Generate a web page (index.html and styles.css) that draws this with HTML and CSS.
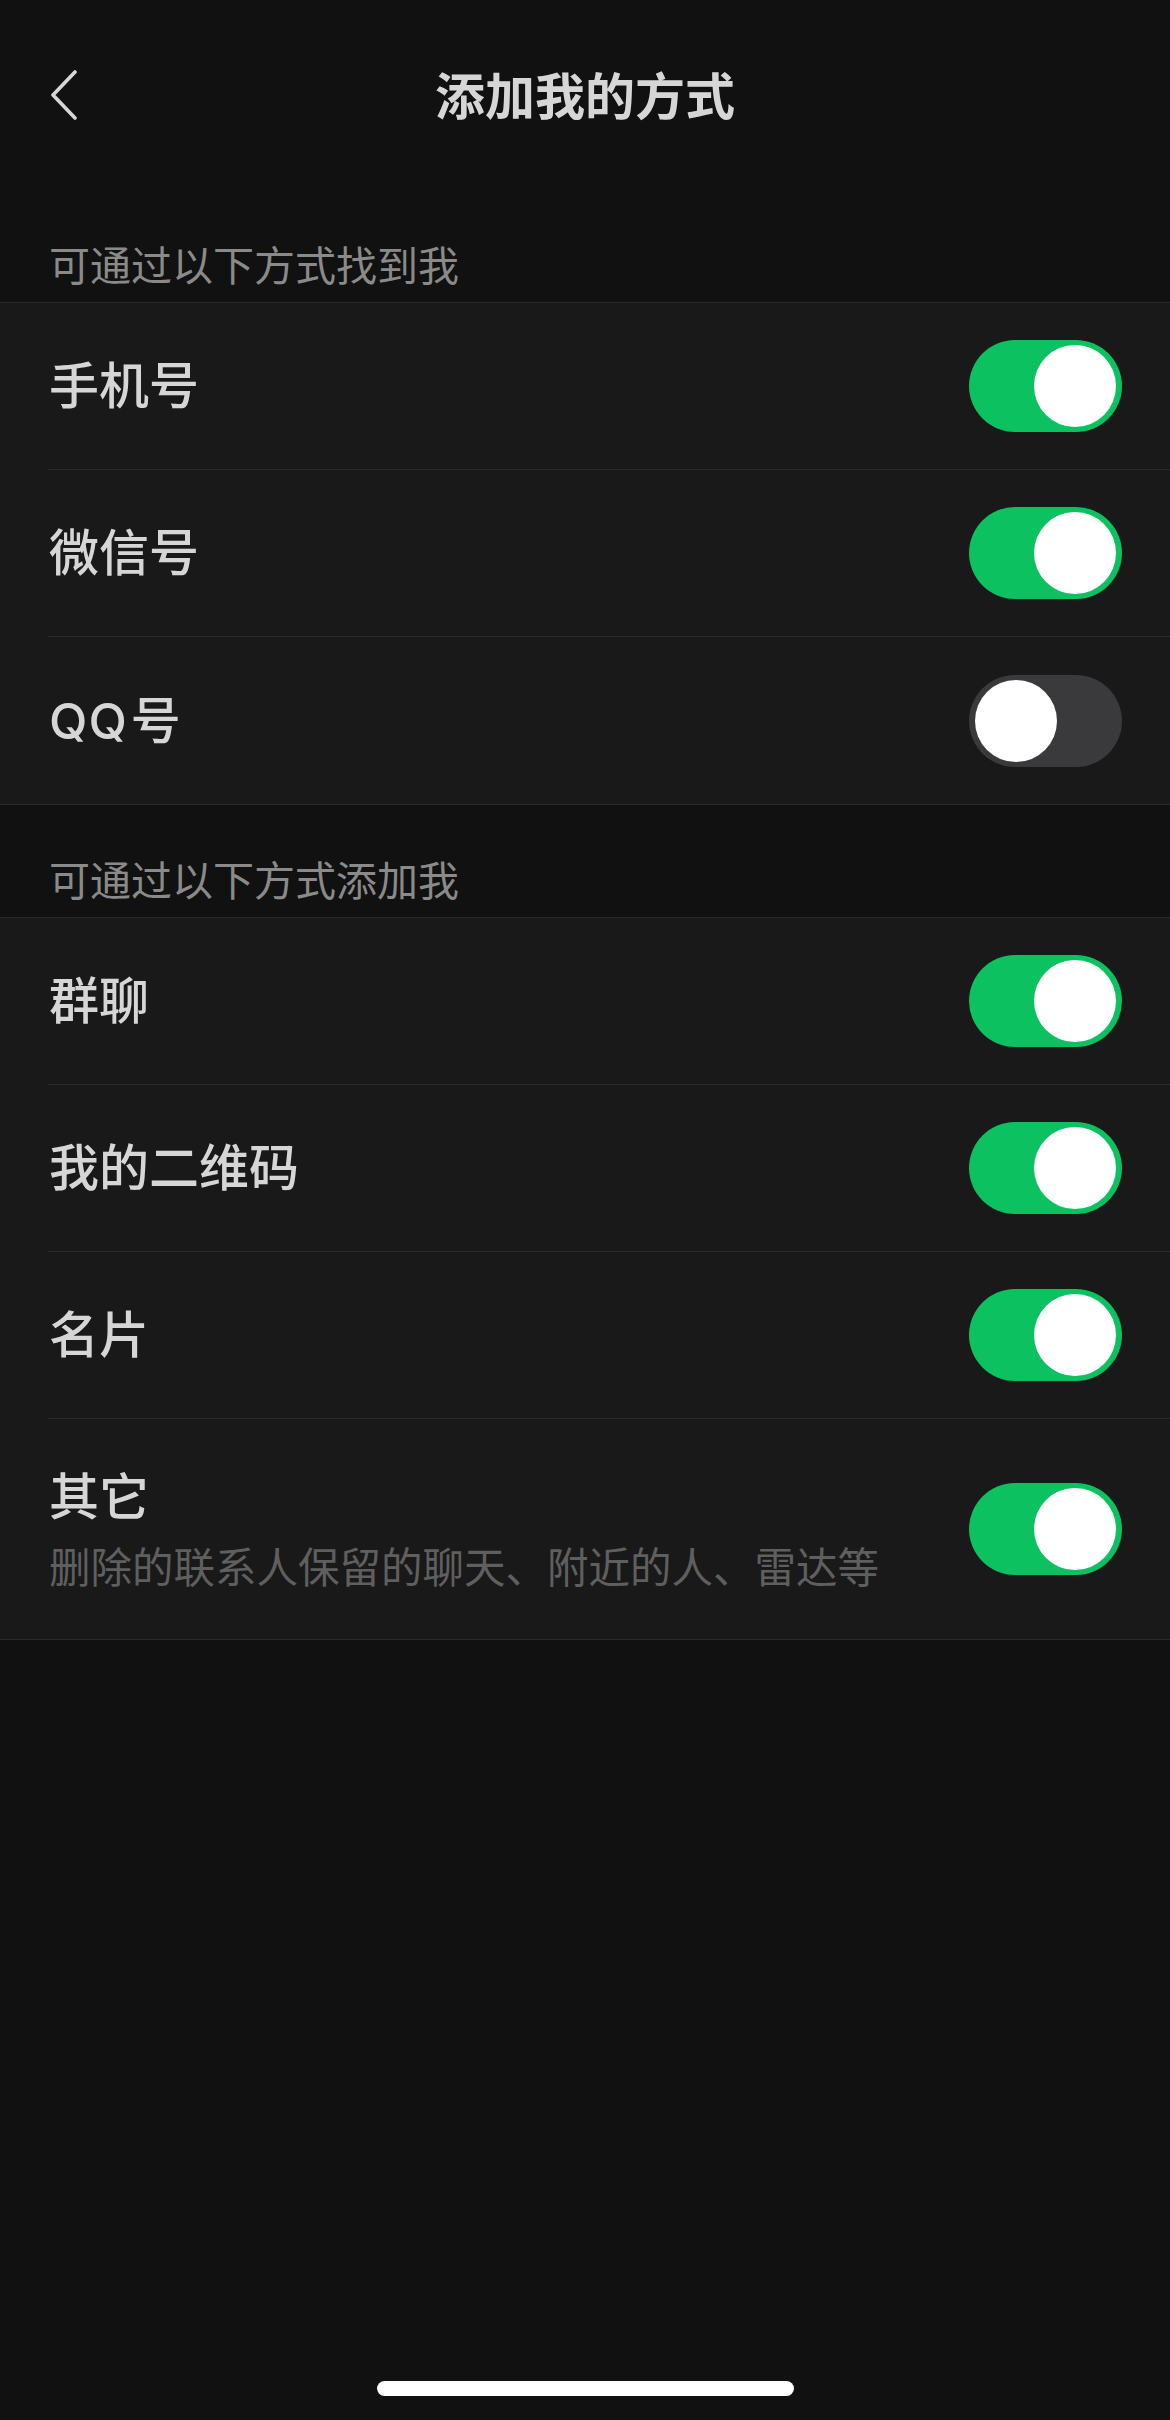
FILE: index.html
```html
<!DOCTYPE html>
<html lang="zh-CN">
    <head>
        <meta charset="UTF-8" />
        <title>添加我的方式</title>
        <link rel="stylesheet" href="styles.css">
    </head>
    <body>
        <div class="page">
            <header class="nav">
                <button class="back" aria-label="返回">
                    <svg width="40" height="60" viewBox="0 0 40 60">
                        <polyline points="26,12 4,35 26,58" fill="none" stroke="#d6d6d6" stroke-width="3.6" stroke-linecap="round" stroke-linejoin="round" />
                    </svg>
                </button>
                <h1>添加我的方式</h1>
            </header>

            <div class="section-title">可通过以下方式找到我</div>
            <div class="group">
                <div class="row">
                    <span class="label">手机号</span>
                    <span class="switch on"></span>
                </div>
                <div class="row">
                    <span class="label">微信号</span>
                    <span class="switch on"></span>
                </div>
                <div class="row">
                    <span class="label"><span class="latin">QQ</span>号</span>
                    <span class="switch"></span>
                </div>
            </div>

            <div class="section-title">可通过以下方式添加我</div>
            <div class="group">
                <div class="row">
                    <span class="label">群聊</span>
                    <span class="switch on"></span>
                </div>
                <div class="row">
                    <span class="label">我的二维码</span>
                    <span class="switch on"></span>
                </div>
                <div class="row">
                    <span class="label">名片</span>
                    <span class="switch on"></span>
                </div>
                <div class="row tall">
                    <div class="text">
                        <span class="label">其它</span>
                        <span class="desc">删除的联系人保留的聊天、附近的人、雷达等</span>
                    </div>
                    <span class="switch on"></span>
                </div>
            </div>

            <div class="spacer"></div>
            <div class="home-bar"></div>
        </div>
    </body>
</html>
```

FILE: styles.css
```css
html,
body {
    margin: 0;
    padding: 0;
    background: #111111;
}
body {
    font-family: "Noto Sans CJK SC", "Noto Sans", sans-serif;
    color: #d6d6d6;
}
.page {
    width: 1170px;
    min-height: 2420px;
    display: flex;
    flex-direction: column;
}
.nav {
    height: 190px;
    display: flex;
    align-items: center;
    justify-content: center;
    position: relative;
}
.nav h1 {
    margin: -4px 0 0;
    font-size: 50px;
    font-weight: 700;
    line-height: 60px;
    color: #d6d6d6;
}
.back {
    position: absolute;
    left: 49px;
    top: 60px;
    width: 40px;
    height: 60px;
    padding: 0;
    border: none;
    background: none;
}
.back svg {
    display: block;
}
.section-title {
    height: 112px;
    box-sizing: border-box;
    display: flex;
    align-items: flex-end;
    padding: 0 0 17px 49px;
    font-size: 41px;
    line-height: 44px;
    color: #8a8a8a;
}
.group {
    background: #191919;
    border-top: 1px solid #2a2a2a;
    border-bottom: 1px solid #2a2a2a;
}
.row {
    height: 167px;
    box-sizing: border-box;
    margin-left: 48px;
    padding-right: 48px;
    display: flex;
    align-items: center;
    justify-content: space-between;
    border-bottom: 1px solid #2a2a2a;
}
.row:last-child {
    border-bottom: none;
}
.row.tall {
    height: 220px;
}
.label {
    font-size: 50px;
    line-height: 60px;
    color: #d6d6d6;
    font-family: Inter, "Noto Sans CJK SC", sans-serif;
    font-weight: 500;
    padding-left: 1px;
}
.latin {
    letter-spacing: 1px;
    margin-right: 3px;
}
.text {
    display: flex;
    flex-direction: column;
}
.text .label {
    line-height: 72px;
}
.desc {
    font-size: 41.5px;
    line-height: 64px;
    color: #5f5f5f;
    padding-left: 1px;
}
.switch {
    width: 153px;
    height: 92px;
    border-radius: 46px;
    background: #3a3a3c;
    box-sizing: border-box;
    padding: 5px 6px;
    display: flex;
    justify-content: flex-start;
    flex-shrink: 0;
}
.switch::after {
    content: "";
    width: 82px;
    height: 82px;
    border-radius: 50%;
    background: #ffffff;
}
.switch.on {
    background: #0bc160;
    justify-content: flex-end;
}
.spacer {
    flex: 1;
}
.home-bar {
    width: 417px;
    height: 15px;
    border-radius: 8px;
    background: #ffffff;
    margin: 0 auto 24px;
}
```
